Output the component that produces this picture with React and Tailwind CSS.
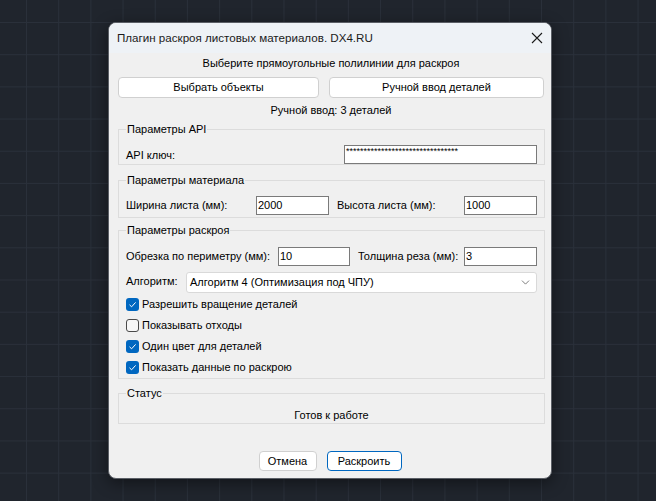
import { ChevronDown } from 'lucide-react';

const font = { fontFamily: '"Liberation Sans", Arial, sans-serif' };

export default function App() {
  return (
    <div
      className="flex h-[501px] w-full items-start justify-center bg-[#20252d] bg-[linear-gradient(to_right,#2a303a_1px,transparent_1px),linear-gradient(to_bottom,#2a303a_1px,transparent_1px)] bg-[size:32.2px_32.2px] bg-[position:26px_22px] pt-[22px] text-[11px] text-black"
      style={font}
    >
      <div className="ml-[4px] w-[444px] overflow-hidden rounded-[8px] border border-[#5b5f66] bg-[#f0f0f0] shadow-[0_4px_16px_rgba(0,0,0,0.45)]">
        <div className="flex h-[30px] items-center justify-between bg-[#eef2f6] pl-[8px] pr-[8px]">
          <span className="text-[11.6px] text-[#1b1b1b]">Плагин раскроя листовых материалов. DX4.RU</span>
          <svg width="12" height="12" viewBox="0 0 12 12" className="text-[#1b1b1b]">
            <path d="M1 1 L11 11 M11 1 L1 11" stroke="currentColor" strokeWidth="1.1" />
          </svg>
        </div>

        <div className="pl-[9px] pr-[7px] pb-[7px]">
          <div className="flex h-[21px] items-center justify-center">Выберите прямоугольные полилинии для раскроя</div>
          <div className="mt-[3px] flex h-[21px] gap-[10px]">
            <button className="w-[201px] rounded-[4px] border border-[#d0d0d0] bg-white">Выбрать объекты</button>
            <button className="flex-1 rounded-[4px] border border-[#d0d0d0] bg-white">Ручной ввод деталей</button>
          </div>
          <div className="flex h-[24px] items-center justify-center">Ручной ввод: 3 деталей</div>

          <Group title="Параметры API" className="pt-[9px]">
            <div className="flex items-center">
              <span className="flex-1 pt-[2px]">API ключ:</span>
              <Field value="********************************" width="w-[193px]" small />
            </div>
          </Group>

          <Group title="Параметры материала" className="mt-[8px] pt-[9px] pb-[2px]">
            <div className="flex items-center">
              <span className="w-[130px]">Ширина листа (мм):</span>
              <Field value="2000" width="w-[73px]" />
              <span className="ml-[8px] flex-1">Высота листа (мм):</span>
              <Field value="1000" width="w-[73px]" />
            </div>
          </Group>

          <Group title="Параметры раскроя" className="mt-[5px] pt-[10px]">
            <div className="flex items-center">
              <span className="w-[152px] whitespace-nowrap">Обрезка по периметру (мм):</span>
              <Field value="10" width="w-[72px]" />
              <span className="ml-[8px] flex-1 whitespace-nowrap">Толщина реза (мм):</span>
              <Field value="3" width="w-[73px]" />
            </div>
            <div className="mt-[6px] flex h-[21px] items-start">
              <span className="w-[60px] pt-[1px]">Алгоритм:</span>
              <div className="flex h-[21px] flex-1 items-center justify-between rounded-[3px] border border-[#d9d9d9] bg-white pl-[3px] pr-[4px]">
                <span>Алгоритм 4 (Оптимизация под ЧПУ)</span>
                <ChevronDown size={13} strokeWidth={1.5} className="text-[#606060]" />
              </div>
            </div>
            <div className="mt-[1px]">
              <Check label="Разрешить вращение деталей" checked />
              <Check label="Показывать отходы" />
              <Check label="Один цвет для деталей" checked />
              <Check label="Показать данные по раскрою" checked />
            </div>
          </Group>

          <Group title="Статус" className="mt-[7px] pt-[8px] pb-[1px]">
            <div className="flex h-[14px] items-center justify-center">Готов к работе</div>
          </Group>

          <div className="mt-[27px] flex h-[20px] justify-center gap-[10px] pr-[2px]">
            <button className="w-[58px] rounded-[4px] border border-[#d0d0d0] bg-white">Отмена</button>
            <button className="w-[75px] rounded-[4px] border border-[#0067c0] bg-white">Раскроить</button>
          </div>
        </div>
      </div>
    </div>
  );
}

function Group({ title, className = '', children }) {
  return (
    <fieldset className={`mr-[-1px] border border-[#dcdcdc] pl-[7px] pr-[7px] ${className}`}>
      <legend className="px-[1px] leading-[14px]">{title}</legend>
      {children}
    </fieldset>
  );
}

function Field({ value, width, small }) {
  return (
    <div className={`flex h-[19px] ${width} border border-[#7a7a7a] bg-white pl-[1px] ${small ? 'items-start text-[9px] leading-[10px]' : 'items-center'}`}>
      {value}
    </div>
  );
}

function Check({ label, checked }) {
  return (
    <div className="flex h-[21px] items-center gap-[3px]">
      {checked ? (
        <span className="flex h-[13px] w-[13px] items-center justify-center rounded-[3px] bg-[#0067c0]">
          <svg width="9" height="9" viewBox="0 0 9 9">
            <path d="M1.5 4.8 L3.6 6.8 L7.6 2.4" fill="none" stroke="white" strokeWidth="1" />
          </svg>
        </span>
      ) : (
        <span className="h-[13px] w-[13px] rounded-[3px] border border-[#4a4a4a] bg-[#f7f7f7]" />
      )}
      <span>{label}</span>
    </div>
  );
}
